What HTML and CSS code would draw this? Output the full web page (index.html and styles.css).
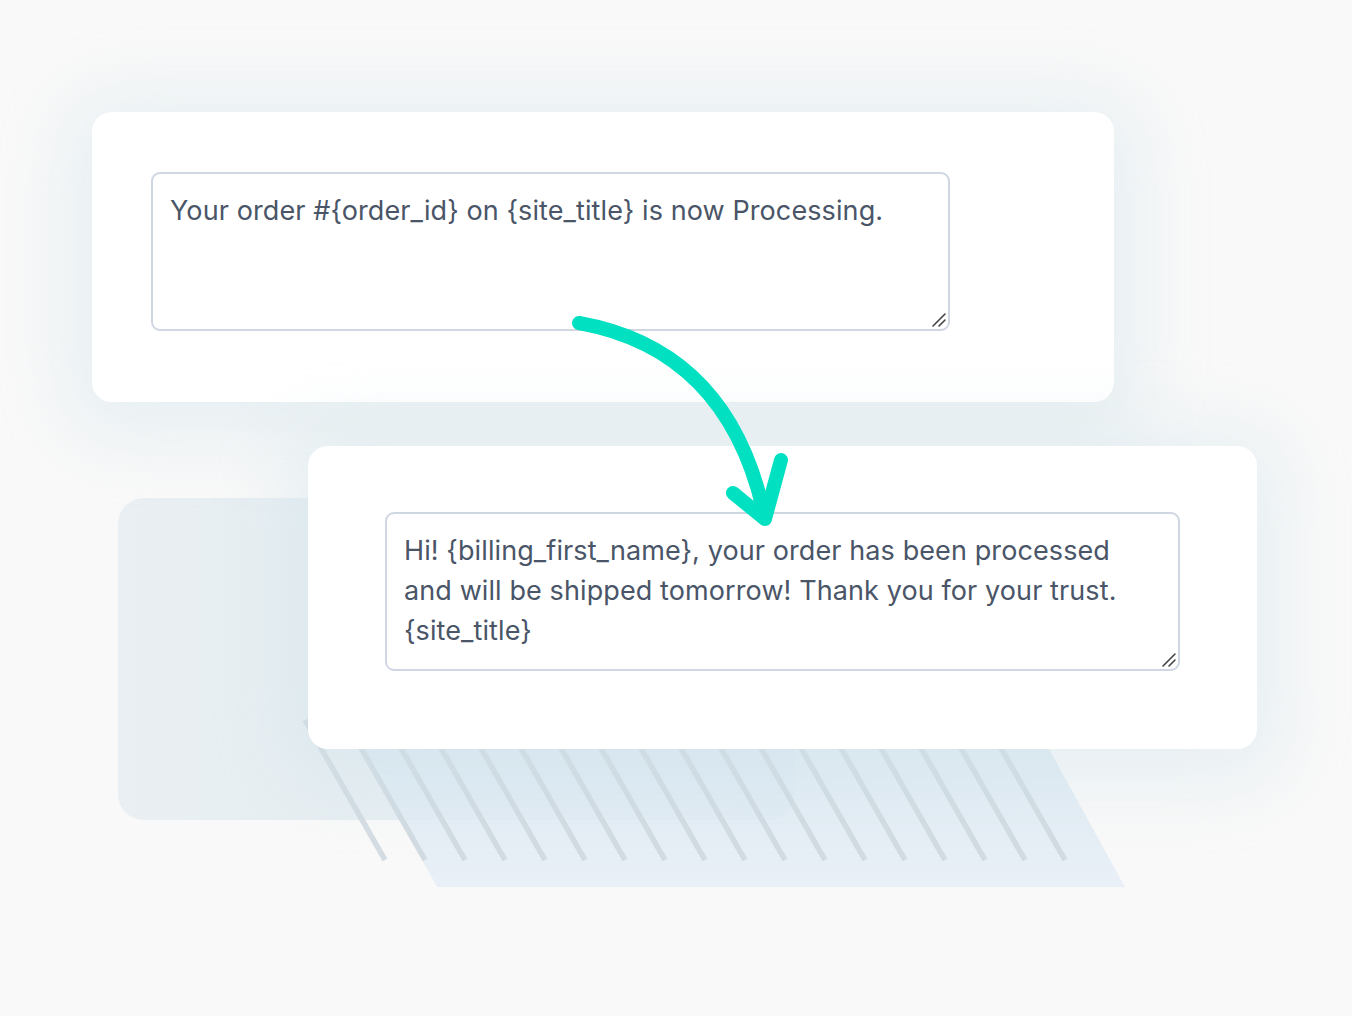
FILE: index.html
```html
<!DOCTYPE html>
<html lang="en">
<head>
<meta charset="utf-8">
<title>Message template</title>
<link rel="stylesheet" href="styles.css">
</head>
<body>
<div class="stage">
  <svg class="backdrop" width="1352" height="1016" viewBox="0 0 1352 1016" aria-hidden="true">
    <defs>
      <linearGradient id="boxg" x1="0" y1="0" x2="1" y2="0">
        <stop offset="0" stop-color="#e9eff2"/>
        <stop offset="1" stop-color="#e2ecf3"/>
      </linearGradient>
      <linearGradient id="parg" x1="0" y1="0" x2="0" y2="1">
        <stop offset="0" stop-color="#d9e8f2"/>
        <stop offset="1" stop-color="#e6eef6"/>
      </linearGradient>
    </defs>
    <rect x="118" y="498" width="677" height="322" rx="26" fill="url(#boxg)"/>
    <polygon points="345,720 1033,720 1125,887 437,887" fill="url(#parg)" opacity="0.85"/>
    <g stroke="#cdd7de" stroke-width="5.5" opacity="0.8">
      <line x1="305" y1="720" x2="385" y2="860"/>
      <line x1="345" y1="720" x2="425" y2="860"/>
      <line x1="385" y1="720" x2="465" y2="860"/>
      <line x1="425" y1="720" x2="505" y2="860"/>
      <line x1="465" y1="720" x2="545" y2="860"/>
      <line x1="505" y1="720" x2="585" y2="860"/>
      <line x1="545" y1="720" x2="625" y2="860"/>
      <line x1="585" y1="720" x2="665" y2="860"/>
      <line x1="625" y1="720" x2="705" y2="860"/>
      <line x1="665" y1="720" x2="745" y2="860"/>
      <line x1="705" y1="720" x2="785" y2="860"/>
      <line x1="745" y1="720" x2="825" y2="860"/>
      <line x1="785" y1="720" x2="865" y2="860"/>
      <line x1="825" y1="720" x2="905" y2="860"/>
      <line x1="865" y1="720" x2="945" y2="860"/>
      <line x1="905" y1="720" x2="985" y2="860"/>
      <line x1="945" y1="720" x2="1025" y2="860"/>
      <line x1="985" y1="720" x2="1065" y2="860"/>
    </g>
  </svg>

  <section class="card card-top">
    <div class="field field-top">
      <p class="field-text">Your order #{order_id} on {site_title} is now Processing.</p>
      <svg class="grip" width="16" height="16" viewBox="0 0 16 16" aria-hidden="true"><path d="M2 14 L14 2 M8 14 L14 8" stroke="#454545" stroke-width="1.6" stroke-linecap="round"/></svg>
    </div>
  </section>

  <section class="card card-bottom">
    <div class="field field-bottom">
      <p class="field-text">Hi! {billing_first_name}, your order has been processed and will be shipped tomorrow! Thank you for your trust. {site_title}</p>
      <svg class="grip" width="16" height="16" viewBox="0 0 16 16" aria-hidden="true"><path d="M2 14 L14 2 M8 14 L14 8" stroke="#454545" stroke-width="1.6" stroke-linecap="round"/></svg>
    </div>
  </section>

  <svg class="arrow" width="1352" height="1016" viewBox="0 0 1352 1016" aria-hidden="true">
    <path d="M579 323 Q 730 350 765 518" fill="none" stroke="#02e0c2" stroke-width="14" stroke-linecap="round"/>
    <path d="M733 493 L765 519 L781 460" fill="none" stroke="#02e0c2" stroke-width="14" stroke-linecap="round" stroke-linejoin="round"/>
  </svg>
</div>
</body>
</html>
```

FILE: styles.css
```css
* { box-sizing: border-box; }

html, body {
  margin: 0;
  padding: 0;
  background: #f9f9f9;
}

body {
  font-family: Inter, "Noto Sans", "Liberation Sans", sans-serif;
  color: #4a5568;
}

.stage {
  position: relative;
  width: 1352px;
  height: 1016px;
  overflow: hidden;
  padding-top: 112px;
  display: flex;
  flex-direction: column;
}

.backdrop {
  position: absolute;
  left: 0;
  top: 0;
  z-index: 0;
}

.arrow {
  position: absolute;
  left: 0;
  top: 0;
  z-index: 3;
  pointer-events: none;
}

.card {
  position: relative;
  z-index: 1;
  background: #ffffff;
  border-radius: 20px;
  box-shadow: 0 10px 70px 25px rgba(208, 226, 233, 0.42);
  flex: none;
}

.card-top {
  margin-left: 92px;
  width: 1022px;
  height: 290px;
  padding: 60px 0 0 59px;
}

.card-bottom {
  margin-left: 308px;
  margin-top: 44px;
  width: 949px;
  height: 303px;
  padding: 66px 0 0 77px;
  z-index: 2;
}

.field {
  position: relative;
  height: 159px;
  border: 2px solid #cfd7e3;
  border-radius: 9px;
  padding: 17px 30px 17px 17px;
  background: #fff;
}

.field-top { width: 799px; }
.field-bottom { width: 795px; }

.field-text {
  margin: 0;
  font-size: 27px;
  line-height: 40px;
  color: #4a5568;
  letter-spacing: 0.1px;
}

.grip {
  position: absolute;
  right: 1px;
  bottom: 1px;
}
```
